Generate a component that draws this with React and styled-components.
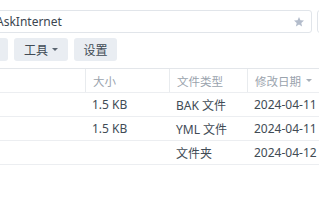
import React from 'react';
import styled, { createGlobalStyle } from 'styled-components';

const Global = createGlobalStyle`
  html, body {
    margin: 0;
    padding: 0;
    background: #fff;
    overflow: hidden;
  }
  body {
    font-family: "Noto Sans", "Noto Sans CJK SC", sans-serif;
    color: #414b55;
  }
`;

const Page = styled.div`
  width: 319px;
  height: 200px;
  overflow: hidden;
  padding-top: 10px;
  box-sizing: border-box;
`;

const AddressRow = styled.div`
  display: flex;
  gap: 5px;
  height: 23px;
  margin-left: -40px;
`;

const Address = styled.div`
  flex: 0 0 352px;
  box-sizing: border-box;
  border: 1px solid #e1e5ea;
  border-radius: 3px;
  display: flex;
  align-items: center;
  padding: 0 6px 0 35px;
  font-size: 12px;
  color: #3c4650;
`;

const AddressText = styled.span`
  flex: 1;
`;

const Side = styled.div`
  flex: 0 0 40px;
  box-sizing: border-box;
  border: 1px solid #e1e5ea;
  border-radius: 3px;
`;

const Toolbar = styled.div`
  display: flex;
  gap: 6px;
  margin-top: 5px;
  margin-left: -32px;
  height: 23px;
`;

const Button = styled.div`
  width: ${(p) => p.$w}px;
  box-sizing: border-box;
  background: #e9edf2;
  border-radius: 3px;
  display: flex;
  align-items: center;
  justify-content: center;
  gap: 4px;
  font-size: 12px;
  color: #414b55;
`;

const Caret = styled.span`
  width: 0;
  height: 0;
  border-left: 3px solid transparent;
  border-right: 3px solid transparent;
  border-top: 3px solid #5a6570;
`;

const Table = styled.div`
  margin-top: 7px;
  border-top: 1px solid #e3e6ea;
`;

const Row = styled.div`
  display: grid;
  grid-template-columns: 85px 84px 78px 1fr;
  height: 24px;
  box-sizing: border-box;
  border-bottom: 1px solid #eceef1;
  align-items: center;
`;

const Cell = styled.div`
  padding-left: 7px;
  height: 100%;
  display: flex;
  align-items: center;
  white-space: nowrap;
  font-size: ${(p) => (p.$head ? 11.5 : 12)}px;
  color: ${(p) => (p.$head ? '#9aa3ad' : '#414b55')};
  border-left: ${(p) => (p.$head && p.$sep ? '1px solid #e8ebee' : 'none')};
  gap: 5px;
`;

const HeadCaret = styled(Caret)`
  border-top-color: #a8b0b9;
`;

const Star = () => (
  <svg width="12" height="12" viewBox="0 0 24 24">
    <path
      d="M12 2l2.9 6.6 7.1.6-5.4 4.7 1.6 7-6.2-3.7-6.2 3.7 1.6-7L2 9.2l7.1-.6z"
      fill="#b3bccb"
    />
  </svg>
);

const rows = [
  { size: '1.5 KB', type: 'BAK 文件', date: '2024-04-11' },
  { size: '1.5 KB', type: 'YML 文件', date: '2024-04-11' },
  { size: '', type: '文件夹', date: '2024-04-12' },
];

export default function App() {
  return (
    <Page>
      <Global />
      <AddressRow>
        <Address>
          <AddressText>AskInternet</AddressText>
          <Star />
        </Address>
        <Side />
      </AddressRow>
      <Toolbar>
        <Button $w={40} />
        <Button $w={54}>
          工具 <Caret />
        </Button>
        <Button $w={43}>设置</Button>
      </Toolbar>
      <Table>
        <Row>
          <Cell $head />
          <Cell $head $sep>大小</Cell>
          <Cell $head $sep>文件类型</Cell>
          <Cell $head $sep>
            修改日期 <HeadCaret />
          </Cell>
        </Row>
        {rows.map((r, i) => (
          <Row key={i}>
            <Cell />
            <Cell>{r.size}</Cell>
            <Cell>{r.type}</Cell>
            <Cell>{r.date}</Cell>
          </Row>
        ))}
      </Table>
    </Page>
  );
}
